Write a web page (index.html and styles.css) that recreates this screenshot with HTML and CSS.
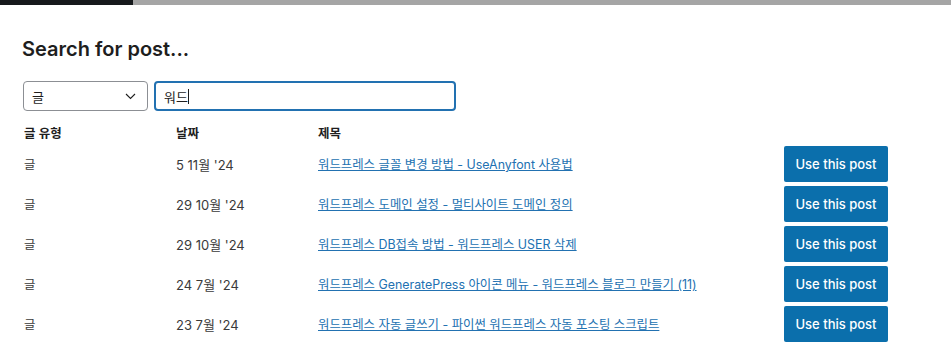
FILE: index.html
```html
<!DOCTYPE html>
<html lang="ko">
  <head>
    <meta charset="UTF-8" />
    <meta name="viewport" content="width=device-width, initial-scale=1.0" />
    <title>Search for post</title>
    <link rel="stylesheet" href="styles.css">
  </head>
  <body>
    <div class="topbar">
      <div class="topbar-dark"></div>
      <div class="topbar-shade"></div>
    </div>
    <div class="panel">
      <h2 class="panel-title">Search for post...</h2>
      <div class="search-row">
        <div class="select-box">
          <span>글</span>
          <svg width="11" height="7" viewBox="0 0 11 7"><path d="M1 1l4.5 4.5L10 1" fill="none" stroke="#1e1e1e" stroke-width="1.1"/></svg>
        </div>
        <div class="search-input">워드<span class="caret"></span></div>
      </div>
      <table class="results">
        <thead>
          <tr>
            <th class="col-type">글 유형</th>
            <th class="col-date">날짜</th>
            <th class="col-title">제목</th>
            <th></th>
          </tr>
        </thead>
        <tbody>
          <tr>
            <td>글</td>
            <td class="date">5 11월 '24</td>
            <td><a href="#">워드프레스 글꼴 변경 방법 - UseAnyfont 사용법</a></td>
            <td><button class="use-btn">Use this post</button></td>
          </tr>
          <tr>
            <td>글</td>
            <td class="date">29 10월 '24</td>
            <td><a href="#">워드프레스 도메인 설정 - 멀티사이트 도메인 정의</a></td>
            <td><button class="use-btn">Use this post</button></td>
          </tr>
          <tr>
            <td>글</td>
            <td class="date">29 10월 '24</td>
            <td><a href="#">워드프레스 DB접속 방법 - 워드프레스 USER 삭제</a></td>
            <td><button class="use-btn">Use this post</button></td>
          </tr>
          <tr>
            <td>글</td>
            <td class="date">24 7월 '24</td>
            <td><a href="#">워드프레스 GeneratePress 아이콘 메뉴 - 워드프레스 블로그 만들기 (11)</a></td>
            <td><button class="use-btn">Use this post</button></td>
          </tr>
          <tr>
            <td>글</td>
            <td class="date">23 7월 '24</td>
            <td><a href="#">워드프레스 자동 글쓰기 - 파이썬 워드프레스 자동 포스팅 스크립트</a></td>
            <td><button class="use-btn">Use this post</button></td>
          </tr>
        </tbody>
      </table>
    </div>
  </body>
</html>
```

FILE: styles.css
```css
body {
  margin: 0;
  padding: 0;
  background-color: #fff;
  font-family: Inter, "Noto Sans CJK KR", sans-serif;
  color: #1e1e1e;
}
.topbar {
  display: flex;
  height: 5px;
}
.topbar-dark {
  width: 133px;
  background-color: #16191c;
}
.topbar-shade {
  flex: 1;
  background-color: #a5a5a5;
}
.panel {
  padding: 0 22px;
}
.panel-title {
  margin: 32px 0 0;
  font-size: 20px;
  font-weight: 600;
  line-height: 24px;
}
.search-row {
  display: flex;
  gap: 6px;
  margin-top: 20px;
  padding-left: 1px;
}
.select-box {
  width: 125px;
  height: 30px;
  box-sizing: border-box;
  border: 1px solid #8c8f94;
  border-radius: 4px;
  display: flex;
  justify-content: space-between;
  align-items: center;
  padding: 0 11px 0 8px;
  font-size: 13px;
}
.search-input {
  width: 302px;
  height: 30px;
  box-sizing: border-box;
  border: 2px solid #2271b1;
  border-radius: 4px;
  display: flex;
  align-items: center;
  padding: 0 8px;
  font-size: 13px;
}
.caret {
  display: inline-block;
  width: 1px;
  height: 15px;
  background-color: #1e1e1e;
}
.results {
  border-collapse: collapse;
  margin-top: 9px;
  width: 866px;
}
.results th {
  text-align: left;
  font-size: 12.5px;
  font-weight: 600;
  height: 24px;
  padding: 0 0 0 2px;
}
.results td {
  font-size: 12.4px;
  height: 40px;
  padding: 0 0 0 2px;
  color: #3a3a3a;
}
.results td.date {
  font-size: 13px;
}
.col-type {
  width: 150px;
}
.col-date {
  width: 140px;
}
.results a {
  color: #2271b1;
  text-decoration: underline;
}
.results td:last-child {
  text-align: right;
}
.use-btn {
  width: 104px;
  height: 36px;
  border: none;
  border-radius: 2px;
  background-color: #0b6fac;
  color: #fff;
  font-family: Inter, sans-serif;
  font-size: 13px;
  font-weight: 500;
  cursor: pointer;
}
```
